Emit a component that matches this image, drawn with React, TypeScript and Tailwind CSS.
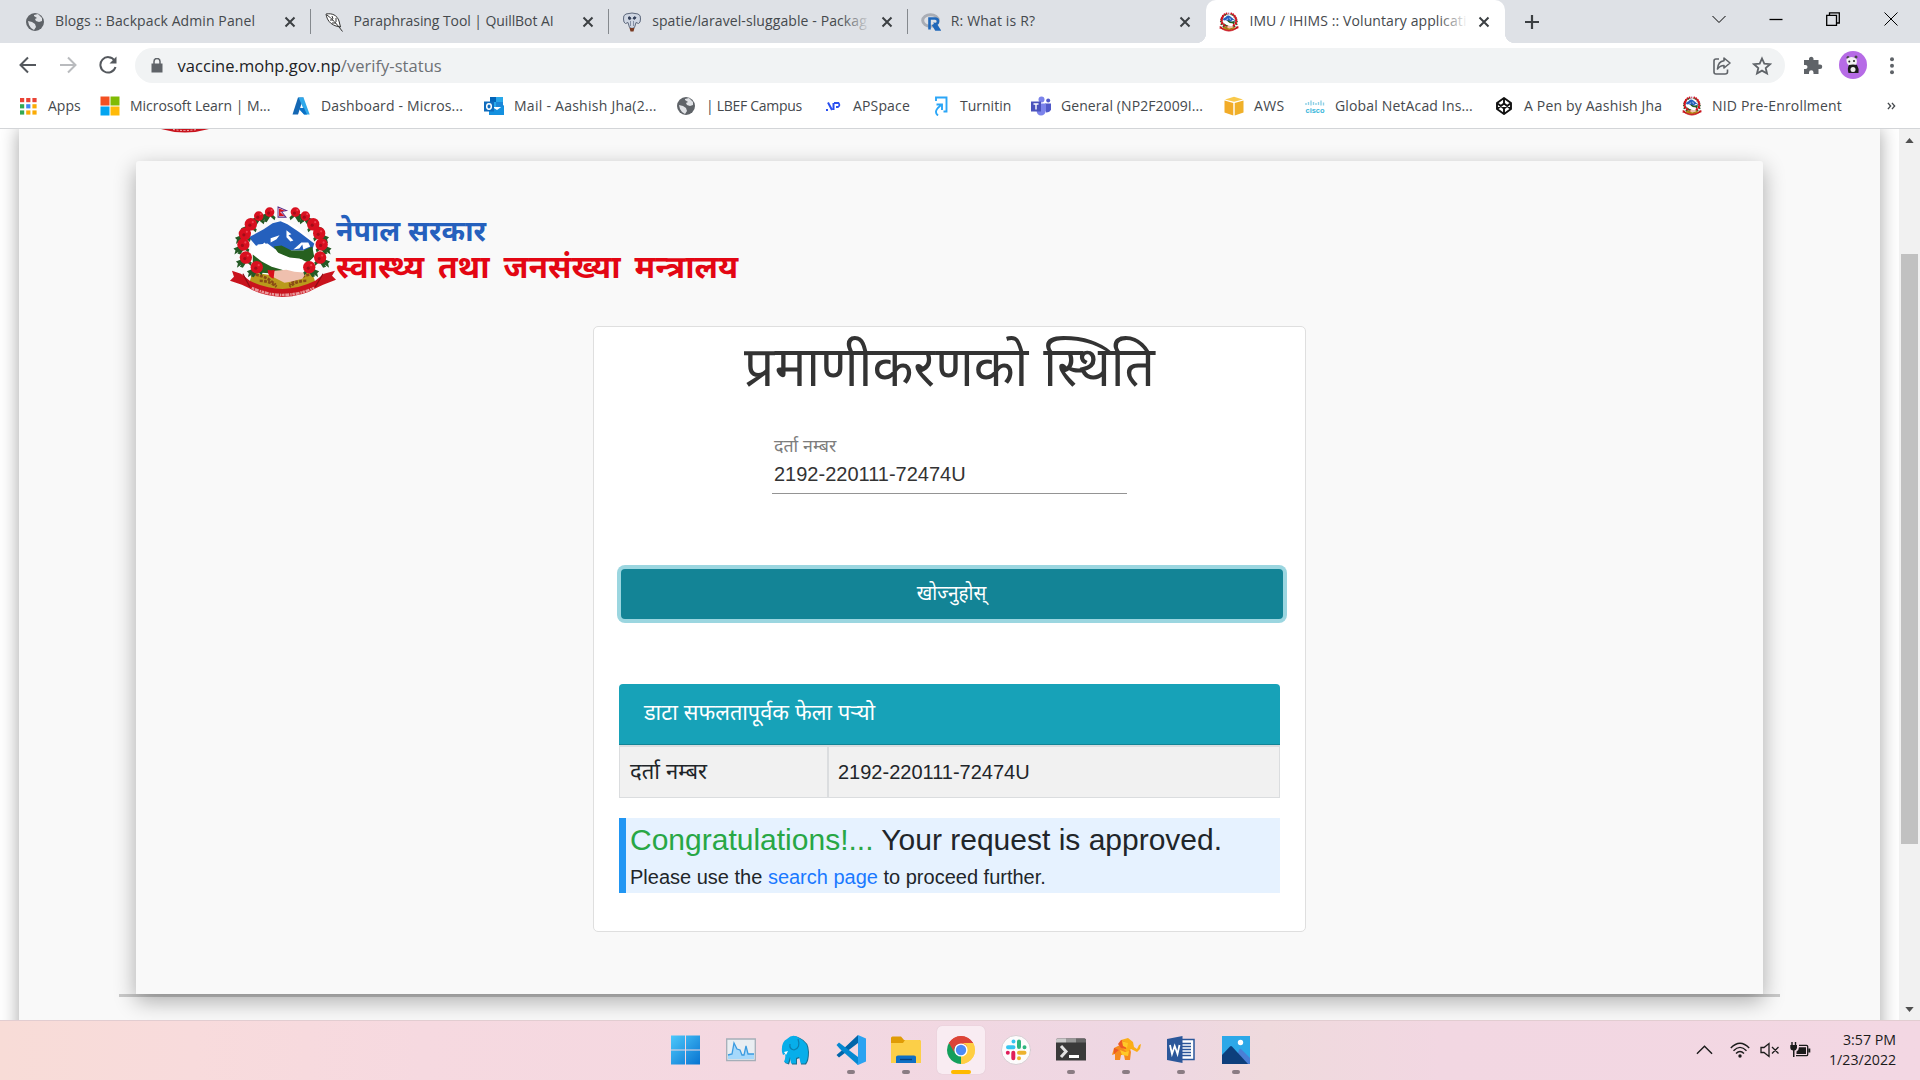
import type { ReactNode } from "react";

const FLOWERS: [number, number][] = [
  [50, 12], [39, 16], [31, 24], [25, 33.5], [23.5, 44], [26, 57], [37, 66.5],
  [76, 12], [86, 16], [94, 24], [100, 33], [102.5, 44], [101, 57], [90, 66.5],
];

function Emblem({ className }: { className: string }) {
  return (
    <svg viewBox="9 5 109 93" className={className} preserveAspectRatio="none">
      <path d="M63 20C45 24 30 40 30 56C30 76 48 86 63 86C80 86 97 76 97 56C97 40 80 24 63 20Z" fill="#fff" />
      <path d="M29 37L44 29L53 23L61 21L68 24L80 32L95 43L93 50L80 50L64 50L50 48L36 45Z" fill="#2560bd" />
      <path d="M67 30l5 4-3 1 5 5-3 1-4-4zM51 38l9-3-3 4-6 3zM45 42l-5 4 7-1zM82 42l-8 7 6-1 3-4 1 5 7-3-2-4z" fill="#fff" />
      <path d="M54 46L62 45L72 50L84 50L93 46L95 56L89 62L80 58L70 57L58 52ZM33 54L42 61L52 66L66 70L58 73L42 72L33 66Z" fill="#26601f" />
      <path d="M38 44L48 43L56 49L60 54L72 58L83 59L89 67L84 71L66 70L52 64L40 58L34 52Z" fill="#fff" />
      <path d="M33 70C40 75 52 72 60 78C70 74 84 72 93 72L97 84C78 97 45 96 29 84Z" fill="#b99a1c" />
      <path d="M36 74q12 2 20 10M40 80q10 0 17 6M90 74q-12 2-20 10M87 80q-10 0-17 6" stroke="#8a4b16" strokeWidth="2.6" strokeDasharray="3 1.2" fill="none" />
      <path d="M55 70l12-1 8 2 12 1-4 6-12 3-6 1-8-4-6-3z" fill="#efc0ae" />
      <path d="M48 69q4 1 7 0l-1 9q-6-2-6-9" fill="#d8101c" />
      {FLOWERS.map(([x, y], i) => {
        const s = x < 63 ? -1 : 1;
        return (
          <g key={i}>
            <path d={`M${x} ${y}l${s * 10} 4l${s * -2} 2l${s * 1} 4l${s * -6} -4zM${x} ${y}l${s * -6} 5l${s * 1} 3l${s * 6} -5zM${x} ${y}l${s * 6} 9l${s * -3} 1l${s * -4} -6z`} fill="#245a25" />
            <circle cx={x} cy={y} r={i % 7 < 2 ? 4.8 : 6.2} fill="#d8101f" />
            <circle cx={x - 1} cy={y + 1} r="1.6" fill="#a30c18" />
            <circle cx={x + 2} cy={y - 2} r="1.1" fill="#ee4050" />
          </g>
        );
      })}
      <path d="M58.500 7L67 10.500L62 11.500L66.500 17L58.500 17Z" fill="#fff" stroke="#5a2c86" strokeWidth="1" />
      <path d="M59.500 8.500L65 10.500L60.500 12L65 16L59.500 16Z" fill="#d8101f" />
      <path d="M12 70l9 3 9 7q33 16 66 0l9-7 11-3-3 5 4 4-13 5-7 3q-13 8-34 9-21-1-34-9l-7-3-12-4 4-4z" fill="#c9131d" />
      <path d="M23 73l7 13M104 73l-8 13" stroke="#8f0d15" strokeWidth="1.300" fill="none" />
      <path d="M32 87q31 14 63 0" stroke="#f3c6c6" strokeWidth="2.600" strokeDasharray="2.500 .8 4 1 1.500 .7" opacity=".75" fill="none" />
    </svg>
  );
}

function Globe() {
  return (
    <svg viewBox="0 0 20 20" className="size-[20px]">
      <circle cx="10" cy="10" r="9" fill="#5f6368" />
      <path d="M3 9l4 1 3 2 1 3-2 3-3-2-2-3zM9 3l4-1 4 4v3l-3 1-3-1-1-2 2-1-3-2z" fill="#dfe1e5" />
    </svg>
  );
}

function CloseX() {
  return (
    <svg viewBox="0 0 12 12" className="size-[12px]">
      <path d="M1.500 1.500L10.500 10.500M10.500 1.500L1.500 10.500" stroke="#3c4043" strokeWidth="2" />
    </svg>
  );
}

const Quill = () => (
  <svg viewBox="0 0 20 20" className="size-[20px]">
    <path d="M2 2C8 1 13 3 15 9L16.500 15L12 14C6 12 3 8 2 2Z" fill="#fff" stroke="#333" strokeWidth="1" />
    <path d="M3 3Q10 8 18.500 19.500M6 8l3 0M8 11l4 0M8 4l1 3M12 6l0 4" stroke="#333" strokeWidth="1" fill="none" />
  </svg>
);

const Packagist = () => (
  <svg viewBox="0 0 20 20" className="size-[20px]">
    <path d="M4 2q6-2 12 0 3 1 2.500 5 0 4-2 4.500l-2.500-1-1.500 5q-2.500 2-5 0l-1.500-5-2.500 1q-2-.5-2-4.500Q1 3 4 2z" fill="#cfd6e2" stroke="#5c677b" />
    <path d="M6 5.500q2-2 3 1-1 2-3 0M11 6.500q1-3 3-1-1 3-3 1" stroke="#34405a" fill="#34405a" />
    <path d="M8.500 9v5M11.500 9v5" stroke="#8590a4" fill="none" />
    <path d="M7.500 16h5l-1 3.500h-3z" fill="#7a3b22" />
  </svg>
);

const RLogo = () => (
  <svg viewBox="0 0 20 20" className="size-[20px]">
    <ellipse cx="9.500" cy="8.500" rx="7.800" ry="5.800" fill="none" stroke="#a9adb5" strokeWidth="3" />
    <path d="M8.500 17.500V6.500H14Q17 6.500 17 9.300T14.500 12L18 17.500H15L12 12.500" fill="none" stroke="#2068ba" strokeWidth="2.600" />
  </svg>
);

function Tab({ icon, title, active = false, wide = "w-[228px]", fade = false }: { icon: ReactNode; title: string; active?: boolean; wide?: string; fade?: boolean }) {
  return (
    <div className={`relative flex h-[43px] w-[298.600px] shrink-0 items-center pl-[13px] ${active ? "rounded-t-[10px] bg-white" : ""}`}>
      {active && (
        <>
          <span className="absolute bottom-0 -left-[10px] size-[10px] bg-[radial-gradient(circle_at_0_0,#dee1e6_10px,#fff_10.500px)]" />
          <span className="absolute bottom-0 -right-[10px] size-[10px] bg-[radial-gradient(circle_at_100%_0,#dee1e6_10px,#fff_10.500px)]" />
        </>
      )}
      <span className="flex w-[20px] justify-center">{icon}</span>
      <span className={`relative mb-[2px] ml-[10px] shrink-0 text-[14px] whitespace-nowrap text-[#45494d] ${wide}`}>
        {title}
        {fade && <span className={`absolute inset-y-0 right-0 w-[30px] bg-gradient-to-r from-transparent ${active ? "to-white" : "to-[#dee1e6]"}`} />}
      </span>
      <span className="ml-auto pr-[15px]">
        <CloseX />
      </span>
    </div>
  );
}

const TabDivider = () => <span className="-ml-px h-[25px] w-px shrink-0 bg-[#85898e]" />;

const icons = {
  apps: (
    <svg viewBox="0 0 20 20" className="size-[20px]">
      {["#ea4335", "#ea4335", "#ea4335", "#34a853", "#4285f4", "#fbab05", "#34a853", "#fbab05", "#fbab05"].map((c, i) => (
        <rect key={i} x={2 + (i % 3) * 6.2} y={2 + Math.floor(i / 3) * 6.2} width="4.200" height="4.200" fill={c} />
      ))}
    </svg>
  ),
  ms: (
    <svg viewBox="0 0 20 20" className="size-[20px]">
      <path d="M.5 .5h9v9h-9z" fill="#f35022" />
      <path d="M10.500 .5h9v9h-9z" fill="#80bb03" />
      <path d="M.5 10.500h9v9h-9z" fill="#03a5f0" />
      <path d="M10.500 10.500h9v9h-9z" fill="#ffba08" />
    </svg>
  ),
  azure: (
    <svg viewBox="0 0 20 20" className="size-[20px]">
      <path d="M7 1.500h5.500L7 18.500H1.500Z" fill="#1467b3" />
      <path d="M7.500 1.500h5L18.700 18.500h-5.500L9 13.500l3.500-.5L9.500 6z" fill="#2fa8ea" />
      <path d="M7 12h6l3 6.500h-3z" fill="#0b70c5" />
    </svg>
  ),
  outlook: (
    <svg viewBox="0 0 20 20" className="size-[20px]">
      <path d="M6 1h13v10H6z" fill="#28a8ea" />
      <path d="M6 1h6v5H6z" fill="#0364b8" />
      <path d="M12 6h7v5h-7z" fill="#1a86d8" />
      <path d="M5 9l8 5 7-5v10H5z" fill="#1490df" />
      <path d="M0 5.500h10v10H0z" fill="#0f6cbd" />
      <ellipse cx="5" cy="10.500" rx="2.300" ry="2.700" fill="none" stroke="#fff" strokeWidth="1.500" />
    </svg>
  ),
  aps: (
    <svg viewBox="0 0 20 20" className="size-[20px]">
      <path d="M3 14h2M5 6.500l4 7.500M10.500 14V7" stroke="#2a50f0" strokeWidth="2" fill="none" />
      <path d="M11 7h4.500q2 2.500-.5 4H13" stroke="#2a50f0" strokeWidth="1.800" fill="none" />
    </svg>
  ),
  turnitin: (
    <svg viewBox="0 0 20 20" className="size-[20px]">
      <path d="M6 5V1.500H16.500V15.500H13.500M8 19.500Q2.500 15 12 8.500M6.500 8.500H12V14" stroke="#2ba6f7" strokeWidth="1.900" fill="none" />
    </svg>
  ),
  teams: (
    <svg viewBox="0 0 20 20" className="size-[20px]">
      <circle cx="10.500" cy="3.500" r="3" fill="#7b83eb" />
      <circle cx="17.200" cy="4.500" r="2" fill="#5059c9" />
      <path d="M14 7.500h6v6q-1 3-5 3z" fill="#5059c9" />
      <path d="M6 7.500h9v7q-1 5-5 5t-4.500-5z" fill="#7b83eb" />
      <path d="M0 5.500h10v10H0z" fill="#4b53bc" />
      <path d="M2.500 8h5M5 8v5.500" stroke="#fff" strokeWidth="1.400" />
    </svg>
  ),
  aws: (
    <svg viewBox="0 0 20 20" className="size-[20px]">
      <path d="M1 3.500L10 .8l9 2.700-9 2.300z" fill="#f9c94c" />
      <path d="M.5 4.500L9.300 7v12.500L.5 16.500z" fill="#f2ab27" />
      <path d="M19.500 4.500L10.700 7v12.500l8.800-3z" fill="#f0b029" />
    </svg>
  ),
  cisco: (
    <svg viewBox="0 0 20 20" className="size-[20px]">
      <path d="M1 7v2M3.500 6v3M6 4.500v5M8.500 6v3M11 7v2M13.500 6v3M16 4.500v5M18.500 6.500v3" stroke="#8fd0e6" strokeWidth="1.400" />
      <text x=".5" y="16.500" fontSize="7.500" fontWeight="700" textLength="19" lengthAdjust="spacingAndGlyphs" fill="#35b4da" fontFamily="Liberation Sans, sans-serif">cisco</text>
    </svg>
  ),
  codepen: (
    <svg viewBox="0 0 20 20" className="size-[20px]" fill="none" stroke="#111" strokeWidth="1.900" strokeLinejoin="round">
      <path d="M10 2L17 7V13L10 18L3 13V7ZM3 7L10 12.500L17 7M3 13L10 7.500L17 13M10 2V7.500M10 12.500V18" />
    </svg>
  ),
};

const BOOKMARKS: { icon: ReactNode; text: string; w: string; t?: string }[] = [
  { icon: icons.apps, text: "Apps", w: "w-[82px]" },
  { icon: icons.ms, text: "Microsoft Learn | M...", w: "w-[191px]", t: "tracking-[-0.04px]" },
  { icon: icons.azure, text: "Dashboard - Micros...", w: "w-[193px]", t: "tracking-[0.16px]" },
  { icon: icons.outlook, text: "Mail - Aashish Jha(2...", w: "w-[192px]", t: "tracking-[0.26px]" },
  { icon: <Globe />, text: "| LBEF Campus", w: "w-[147px]", t: "tracking-[-0.3px]" },
  { icon: icons.aps, text: "APSpace", w: "w-[107px]", t: "tracking-[0.15px]" },
  { icon: icons.turnitin, text: "Turnitin", w: "w-[101px]" },
  { icon: icons.teams, text: "General (NP2F2009I...", w: "w-[193px]", t: "tracking-[0.08px]" },
  { icon: icons.aws, text: "AWS", w: "w-[81px]", t: "tracking-[0.3px]" },
  { icon: icons.cisco, text: "Global NetAcad Ins...", w: "w-[189px]", t: "tracking-[0.15px]" },
  { icon: icons.codepen, text: "A Pen by Aashish Jha", w: "w-[188px]", t: "tracking-[0.18px]" },
  { icon: <Emblem className="h-[20px] w-[20px]" />, text: "NID Pre-Enrollment", w: "w-[180px]", t: "tracking-[0.18px]" },
];

function Browser() {
  return (
    <header className="shrink-0 font-['Open_Sans',sans-serif]">
      <div className="flex h-[43px] items-center bg-[#dee1e6] pl-[12px]">
        <Tab icon={<Globe />} title="Blogs :: Backpack Admin Panel" wide="w-[228px] tracking-[0.1px]" />
        <TabDivider />
        <Tab icon={<Quill />} title="Paraphrasing Tool | QuillBot AI" wide="w-[228px] tracking-[-0.08px]" />
        <TabDivider />
        <Tab icon={<Packagist />} title="spatie/laravel-sluggable - Packag" wide="w-[219px] tracking-[0.1px]" fade />
        <TabDivider />
        <Tab icon={<RLogo />} title="R: What is R?" wide="w-[228px] tracking-[0.15px]" />
        <Tab icon={<Emblem className="h-[20px] w-[20px]" />} title="IMU / IHIMS :: Voluntary applicati" wide="w-[219px] tracking-[0.1px]" fade active />
        <svg viewBox="0 0 16 16" className="ml-[19px] size-[16px]">
          <path d="M8 1V15M1 8H15" stroke="#3c4043" strokeWidth="2.200" />
        </svg>
        <div className="mb-[6px] ml-auto flex items-center pr-[22px] text-black">
          <svg viewBox="0 0 14 14" className="mr-[43px] size-[14px]" fill="none" stroke="currentColor"><path d="M.5 4L7 10.500L13.500 4" /></svg>
          <svg viewBox="0 0 14 14" className="mr-[43px] size-[14px]" fill="none" stroke="currentColor"><path d="M.5 7.500H13.500" strokeWidth="1.300" /></svg>
          <svg viewBox="0 0 14 14" className="mr-[44px] size-[14px]" fill="none" stroke="currentColor" strokeWidth="1.300"><path d="M.7 3.300H10.500V13.300H.7ZM3.500 3V.8H13.300V11H10.800" /></svg>
          <svg viewBox="0 0 14 14" className="size-[14px]" fill="none" stroke="currentColor"><path d="M.5 .5L13.500 13.500M13.500 .5L.5 13.500" /></svg>
        </div>
      </div>
      <div className="flex h-[45px] items-center bg-white pl-[19px]">
        <svg viewBox="0 0 18 18" className="mb-px size-[18px]" fill="none" stroke="#54585d" strokeWidth="2"><path d="M17 9H2M9 1.500L1.500 9L9 16.500" /></svg>
        <svg viewBox="0 0 18 18" className="mb-px ml-[22px] size-[18px]" fill="none" stroke="#b9bbbe" strokeWidth="2"><path d="M1 9H16M9 1.500L16.500 9L9 16.500" /></svg>
        <svg viewBox="0 0 18 18" className="mb-px ml-[22px] size-[18px]" fill="none" stroke="#54585d" strokeWidth="2"><path d="M15.500 4.500A7.700 7.700 0 1 0 16.500 11" /><path d="M17.500 .5V7.500H10.500Z" fill="#54585d" stroke="none" /></svg>
        <div className="ml-[18px] flex h-[35px] w-[1650px] items-center rounded-full bg-[#f1f3f4] pl-[16px]">
          <svg viewBox="0 0 12 15" className="h-[15px] w-[12px]"><path d="M.5 5.500h11V14.500H.5z" fill="#5f6368" /><path d="M3 6V3.500a3 3 0 0 1 6 0V6" fill="none" stroke="#5f6368" strokeWidth="1.500" /></svg>
          <span className="mt-[1px] ml-[14.500px] text-[16.500px] tracking-[0.04px] text-[#202124]">vaccine.mohp.gov.np<span className="text-[#6d7175]">/verify-status</span></span>
          <svg viewBox="0 0 20 20" className="ml-auto size-[20px]" fill="none" stroke="#5f6368" strokeWidth="1.600" strokeLinejoin="round"><path d="M7 3H4Q2 3 2 5V16Q2 18 4 18H13Q15.500 18 15.500 16V13.500" /><path d="M12 2L18 7L12 12V9.500Q8 9.500 5.500 13Q6 5.500 12 4.800Z" /></svg>
          <svg viewBox="0 0 20 20" className="mr-[13px] ml-[20px] size-[20px]" fill="none" stroke="#5f6368" strokeWidth="1.800"><path d="M10 2.500L12.300 7.600L18 8.200L13.700 12L15 17.500L10 14.600L5 17.500L6.300 12L2 8.200L7.700 7.600Z" /></svg>
        </div>
        <svg viewBox="0 0 20 20" className="mb-px ml-[18px] size-[20px]" fill="#5f6368"><path d="M1 5H6V3.500A2.300 2.300 0 0 1 10.500 3.500V5H15.500V9.500H17A2.200 2.200 0 0 1 17 14H15.500V19H10.500V17.500A2.200 2.200 0 0 0 6 17.500V19H1V14H2.500A2 2 0 0 0 2.500 10H1Z" /></svg>
        <svg viewBox="0 0 28 28" className="mb-px ml-[16px] size-[28px]">
          <circle cx="14" cy="14" r="14" fill="#b66be6" />
          <circle cx="9" cy="6.500" r="1.500" fill="#444" /><circle cx="17" cy="6" r="1.500" fill="#444" />
          <path d="M7.500 8q5-4 10 0 1.500 5-2 6.500H10Q7 12 7.500 8z" fill="#f2f2f2" />
          <circle cx="10.300" cy="10.500" r="1" fill="#222" /><circle cx="15" cy="10" r="1" fill="#222" />
          <path d="M10 14q4-1 8 0 2 3 1.500 8H9.500Q8 17 10 14z" fill="#1c1c1c" /><circle cx="14" cy="18.500" r="2.500" fill="#eee" />
        </svg>
        <svg viewBox="0 0 6 18" className="ml-[22px] h-[18px] w-[6px]" fill="#5f6368"><circle cx="3" cy="2.200" r="2" /><circle cx="3" cy="8.700" r="2" /><circle cx="3" cy="15.200" r="2" /></svg>
      </div>
      <div className="flex h-[41px] items-center border-b border-[#d3d5d8] bg-white pb-[4px] pl-[18px]">
        {BOOKMARKS.map((b) => (
          <div key={b.text} className={`flex shrink-0 items-center gap-[10px] ${b.w}`}>
            <span className="flex size-[20px] shrink-0 items-center justify-center">{b.icon}</span>
            <span className={`mb-[2px] text-[14px] whitespace-nowrap text-[#45494d] ${b.t ?? ""}`}>{b.text}</span>
          </div>
        ))}
        <svg viewBox="0 0 10 8" className="mb-px ml-[25px] h-[8px] w-[9px]" fill="none" stroke="#45494d" strokeWidth="1.500"><path d="M1 .5L4 4L1 7.500M5.500 .5L8.500 4L5.500 7.500" /></svg>
      </div>
    </header>
  );
}

function StatusCard() {
  return (
    <section className="ml-[457px] flex h-[606px] w-[713px] flex-col rounded-[5px] border border-[#dfdfdf] bg-white pl-[25px] text-[#212529]">
      <h1 className="mt-[1px] w-[661px] origin-[50%_75%] scale-y-[1.05] text-center text-[53.300px] leading-[80px] whitespace-nowrap text-[#333]">प्रमाणीकरणको स्थिति</h1>
      <div className="mt-[23px] ml-[153px] flex h-[63px] w-[355px] flex-col border-b border-[#949494] pl-[2px]">
        <span className="h-[28px] text-[17.800px] leading-[30px] text-[#7d7d7d]">दर्ता नम्बर</span>
        <span className="text-[20px] leading-[30px] text-[#333]">2192-220111-72474U</span>
      </div>
      <button className="mt-[75px] ml-[2px] h-[50px] w-[662px] rounded-[4px] bg-[#138496] pb-[3px] text-white shadow-[0_0_0_4px_#9bd6e0]">
        <span className="inline-block scale-x-[0.900] text-[21px] leading-[30px]">खोज्नुहोस्</span>
      </button>
      <div className="mt-[65px] flex h-[61px] w-[661px] items-center rounded-t-[4px] border-b border-[#128496] bg-[#17a2b8] pb-[1px] pl-[25px] text-[21.700px] text-white">डाटा सफलतापूर्वक फेला पऱ्यो</div>
      <div className="flex h-[53px] w-[661px] border border-t-2 border-[#dbdddf] bg-[#f1f1f1]">
        <div className="flex w-[209px] items-center border-r-2 border-[#dbdddf] pb-[2px] pl-[10px] text-[22px]">दर्ता नम्बर</div>
        <div className="flex items-center pb-px pl-[9px] text-[20px]">2192-220111-72474U</div>
      </div>
      <div className="mt-[20px] h-[75px] w-[661px] border-l-[7px] border-[#2196f3] bg-[#e6f2ff] pl-[4px]">
        <p className="pt-[4px] text-[30px] leading-[36px] whitespace-nowrap"><span className="text-[#28a745]">Congratulations!...</span> Your request is approved.</p>
        <p className="pt-[4px] text-[20px] leading-[30px] whitespace-nowrap">Please use the <span className="text-[#1a79ff]">search page</span> to proceed further.</p>
      </div>
    </section>
  );
}

function Page() {
  return (
    <main className="flex h-[891px] shrink-0 overflow-hidden bg-white font-['Liberation_Sans','Noto_Sans_Devanagari',sans-serif]">
      <div className="flex min-w-0 flex-1 overflow-hidden">
        <div className="ml-[19px] h-[1000px] w-[1861px] shrink-0 bg-[#f9f9f9] shadow-[0_0_18px_rgba(0,0,0,0.36)]">
          <svg viewBox="0 0 52 4" className="ml-[140px] h-[4px] w-[52px]"><path d="M2 0Q26 7 50 0Z" fill="#c9131d" /><path d="M14 .5Q26 2.500 38 .5" stroke="#efb9b9" strokeDasharray="2 1.500" fill="none" /></svg>
          <div className="ml-[100px] flex h-[864px] w-[1661px] flex-col items-center border-b-[3px] border-[#c9c9c9] pt-[28px]">
            <div className="flex h-[833px] w-[1627px] shrink-0 flex-col rounded-t-[3px] bg-[#f9f9f9] shadow-[0_7px_22px_rgba(0,0,0,0.32)]">
              <div className="mt-[44px] ml-[93px] flex h-[94px]">
                <Emblem className="h-[94px] w-[108px]" />
                <div className="flex flex-col font-bold whitespace-nowrap">
                  <span className="-ml-[1px] h-[37px] text-[28.400px] leading-[53px] text-[#2560bd]">नेपाल सरकार</span>
                  <span className="-ml-[1px] text-[31.800px] leading-[51px] text-[#e30613] [word-spacing:5px]">स्वास्थ्य तथा जनसंख्या मन्त्रालय</span>
                </div>
              </div>
              <div className="h-[27px]" />
              <StatusCard />
            </div>
          </div>
        </div>
      </div>
      <div className="flex w-[21px] flex-col items-center bg-[#f1f1f1]">
        <svg viewBox="0 0 10 6" className="mt-[9px] h-[5px] w-[9px]"><path d="M0 6L5 0L10 6Z" fill="#505050" /></svg>
        <div className="mt-[111px] h-[590px] w-[17px] bg-[#c1c1c1]" />
        <svg viewBox="0 0 10 6" className="mt-auto mb-[8px] h-[5px] w-[9px]"><path d="M0 0L5 6L10 0Z" fill="#505050" /></svg>
      </div>
    </main>
  );
}

const svg = "size-[30px]";
const TASKS: { art: ReactNode; run?: boolean; active?: boolean }[] = [
  {
    art: (
      <svg viewBox="0 0 30 30" className={svg}>
        <defs><linearGradient id="win" x1="0" y1="0" x2="1" y2="1" gradientUnits="objectBoundingBox"><stop offset="0" stopColor="#4cc8fb" /><stop offset="1" stopColor="#0873d0" /></linearGradient></defs>
        <path d="M0 .5h14v14h-14zM15 .5h14v14h-14zM0 15.500h14v14h-14zM15 15.500h14v14h-14z" fill="url(#win)" />
      </svg>
    ),
  },
  {
    art: (
      <svg viewBox="0 0 30 30" className={svg}>
        <path d="M.7 4h28.600v21.500H.7z" fill="#e9eef2" stroke="#a5aeb8" strokeWidth="1.300" />
        <path d="M2 20l4-1 2-11 3 6 3 1 2 5h2l2-9 2 8 6 0v5H2z" fill="#a5d8fb" />
        <path d="M2 20l4-1 2-11 3 6 3 1 2 5h2l2-9 2 8 6 0" fill="none" stroke="#3b9be0" strokeWidth="1.300" />
      </svg>
    ),
  },
  {
    art: (
      <svg viewBox="0 0 30 30" className={svg}>
        <path d="M2 18Q1 8 7 4Q13-1 19 3Q28 7 28 17Q28 26 25 29.500H20L19 23L16 24V29.500H11L10 23L8 29.500L4 28Q6 23 5 19Z" fill="#1b6f8e" />
        <path d="M1 17Q0 7 6 4Q12-2 18 3Q27 7 27 17Q27 26 24 28.500H20L18 22L15 23V28.500H10L9 22L7 28.500L3 27Q5 22 4 19L2 20Z" fill="#07aeea" />
        <path d="M17 4Q20 13 13 15Q8 14 9 9" fill="none" stroke="#0b7fb0" strokeWidth="1.200" />
        <path d="M3 17l4-1-2 4z" fill="#fff" />
      </svg>
    ),
  },
  {
    run: true,
    art: (
      <svg viewBox="0 0 30 30" className={svg}>
        <path d="M22 0L4 17L.5 20L3 22.500L22 8Z" fill="#0065a9" /><path d="M.5 10L3 7.500L22 22V30L4 14Z" fill="#0588d1" />
        <path d="M22 0L30 3.500V26.500L22 30L20.500 28.500H22Z" fill="#2ba3f1" />
      </svg>
    ),
  },
  {
    run: true,
    art: (
      <svg viewBox="0 0 30 30" className={svg}>
        <path d="M0 3Q0 1.500 1.500 1.500H10L13 5H29V14H0Z" fill="#e09c06" />
        <path d="M0 8H12L14 5H28Q30 5 30 6V28H0Z" fill="#fccf48" />
        <path d="M5 28V22Q5 20.500 7 20.500H23Q25 20.500 25 22V28Z" fill="#0f6fc4" /><path d="M9 24.500H21" stroke="#08417c" strokeWidth="1.300" />
      </svg>
    ),
  },
  {
    active: true,
    art: (
      <svg viewBox="0 0 30 30" className={svg}>
        <path d="M15 15L2.900 8A14 14 0 0 1 27.100 8Z" fill="#dc4437" />
        <path d="M15 15L27.100 8A14 14 0 0 1 15 29Z" fill="#ffce42" />
        <path d="M15 15V29A14 14 0 0 1 2.900 8Z" fill="#139f5b" />
        <path d="M2.900 8L9 18.500A7 7 0 0 1 15 8H27.100A14 14 0 0 0 2.900 8Z" fill="#dc4437" />
        <path d="M27.100 8H15A7 7 0 0 1 21 18.500L15 29A14 14 0 0 0 27.100 8Z" fill="#ffce42" />
        <circle cx="15" cy="15" r="6.600" fill="#fff" /><circle cx="15" cy="15" r="5.200" fill="#4c8bf5" />
      </svg>
    ),
  },
  {
    art: (
      <svg viewBox="0 0 30 30" className={svg} strokeWidth="4" strokeLinecap="round">
        <circle cx="15" cy="15" r="14.500" fill="#fdfcfc" stroke="#cfc6cb" strokeWidth=".8" />
        <path d="M12.500 6.500h0M7 12.300H12.500" stroke="#36c5f0" /><path d="M18 6.500V12M23.500 12.300h0" stroke="#2eb67d" />
        <path d="M18 17.700H23.500M18 23.300h0" stroke="#ecb22e" /><path d="M12.300 17.700V23.300M6.800 17.700h0" stroke="#e01e5a" />
      </svg>
    ),
  },
  {
    run: true,
    art: (
      <svg viewBox="0 0 30 30" className={svg}>
        <path d="M0 5Q0 3.500 1.500 3.500H28.500Q30 3.500 30 5V25.500H0Z" fill="#3a3a3a" /><path d="M0 7.500V5Q0 3.500 1.500 3.500H10V7.500Z" fill="#cbcbcb" /><path d="M10 3.500H20V7.500H10Z" fill="#999" /><path d="M20 3.500H28.500Q30 3.500 30 5V7.500H20Z" fill="#666" />
        <path d="M5 11l5 5.500-5 5.500" stroke="#e3e3e3" strokeWidth="3" fill="none" /><path d="M13 21.500H23" stroke="#fff" strokeWidth="3" />
      </svg>
    ),
  },
  {
    run: true,
    art: (
      <svg viewBox="0 0 30 30" className={svg}>
        <path d="M1 20L3 13L9 10L18 11L20 17L19 25H14L13 20L10 20L9 25H4L4 19Z" fill="#f58a1f" />
        <path d="M10 5L17 3L22 7L23 12L26 14L28 10L30 9L29 14L26 17L20 14L16 17L10 12Z" fill="#fbae17" />
        <path d="M10 5L7 9L10 13L15 14L16 8ZM3 13L8 15L3 19Z" fill="#ee5a24" /><path d="M11 6l6 2-1 5-4-2zM9 15l5 2 4-1-1 5-6-1z" fill="#ffc928" />
      </svg>
    ),
  },
  {
    run: true,
    art: (
      <svg viewBox="0 0 30 30" className={svg}>
        <path d="M15 4.500H28V24.500H15Z" fill="#fff" stroke="#2b579a" strokeWidth="1.500" /><path d="M16 8.500H25M16 11.500H25M16 14.500H25M16 17.500H25M16 20.500H25" stroke="#2b579a" strokeWidth="1.300" />
        <path d="M1 4L16.500 1V28L1 25Z" fill="#2b579a" /><path d="M4 10L6 19L8.700 11L11.500 19L13.500 10" stroke="#fff" strokeWidth="1.800" fill="none" />
      </svg>
    ),
  },
  {
    run: true,
    art: (
      <svg viewBox="0 0 30 30" className={svg}>
        <path d="M1 1H29V29H1Z" fill="#2ca8e8" /><path d="M14 29L18 15Q19 13 20 14L29 23V29Z" fill="#4a7fd6" />
        <path d="M1 20L9 11.500Q10 10.500 11 11.500L27 29H1Z" fill="#0d3f7c" /><circle cx="19.500" cy="7.500" r="2.700" fill="#fff" />
      </svg>
    ),
  },
];

function Taskbar() {
  return (
    <footer className="flex h-[60px] shrink-0 items-start border-t border-[#e2cdd1] bg-[linear-gradient(90deg,#f8dcd7_0%,#f8dbdc_10%,#f6d9e0_22%,#f4d8e1_40%,#eed7e3_60%,#efdadd_66%,#f2d7e2_75%,#f3d7e3_100%)] font-['Open_Sans',sans-serif]">
      <div className="mt-[5px] ml-[662px] flex gap-[7px]">
        {TASKS.map((t, i) => (
          <div key={i} className={`flex h-[48px] w-[48px] flex-col items-center rounded-[5px] pt-[9px] ${t.active ? "bg-[#f9ecf2] shadow-[0_0_1px_#cdb7c1]" : ""}`}>
            {t.art}
            {t.run && <span className="mt-[5px] h-[4px] w-[8px] rounded-full bg-[#8a7c83]" />}
            {t.active && <span className="mt-[5px] h-[4px] w-[20px] rounded-full bg-[#ffb900]" />}
          </div>
        ))}
      </div>
      <div className="mt-[9px] mr-[24px] ml-auto flex items-center text-[#1b1b1b]">
        <svg viewBox="0 0 18 10" className="h-[10px] w-[17px]" fill="none" stroke="#1b1b1b" strokeWidth="1.500"><path d="M1 9L9 1L17 9" /></svg>
        <svg viewBox="0 0 20 16" className="ml-[17px] h-[16px] w-[20px]" fill="none" stroke="#1b1b1b" strokeWidth="1.400"><path d="M.8 6Q10-3.500 19.200 6M3.500 8.800Q10 2 16.500 8.800M6 11.500Q10 7.500 14 11.500" /><circle cx="10" cy="14" r="1.700" fill="#1b1b1b" stroke="none" /></svg>
        <svg viewBox="0 0 20 16" className="ml-[10px] h-[16px] w-[20px]" fill="none" stroke="#1b1b1b" strokeWidth="1.300"><path d="M1 5.500H4L9 1.500V14.500L4 10.500H1ZM12 5L18.500 11.500M18.500 5L12 11.500" /></svg>
        <svg viewBox="0 0 21 16" className="ml-[10px] h-[16px] w-[21px]"><path d="M2 0V3M5.500 0V3" stroke="#1b1b1b" strokeWidth="1.400" /><path d="M.3 3H7V6Q6 8.500 4.500 8.500V15H3V8.500Q.3 8 .3 6Z" fill="#1b1b1b" /><path d="M9 3.300H16.500Q17.700 3.300 17.700 4.500V12.500Q17.700 13.700 16.500 13.700H6" fill="none" stroke="#1b1b1b" strokeWidth="1.300" /><path d="M9 5.300H16V12H6.500V9.500Q9 8 9 5.300ZM18.300 6.500H20.300V10.500H18.300Z" fill="#1b1b1b" /></svg>
        <div className="ml-[18px] w-[67px] text-right text-[14.200px] leading-[20px] whitespace-nowrap"><div>3:57 PM</div><div>1/23/2022</div></div>
      </div>
    </footer>
  );
}

export default function App() {
  return (
    <div className="flex h-[1080px] w-[1920px] flex-col overflow-hidden bg-white">
      <Browser />
      <Page />
      <Taskbar />
    </div>
  );
}
